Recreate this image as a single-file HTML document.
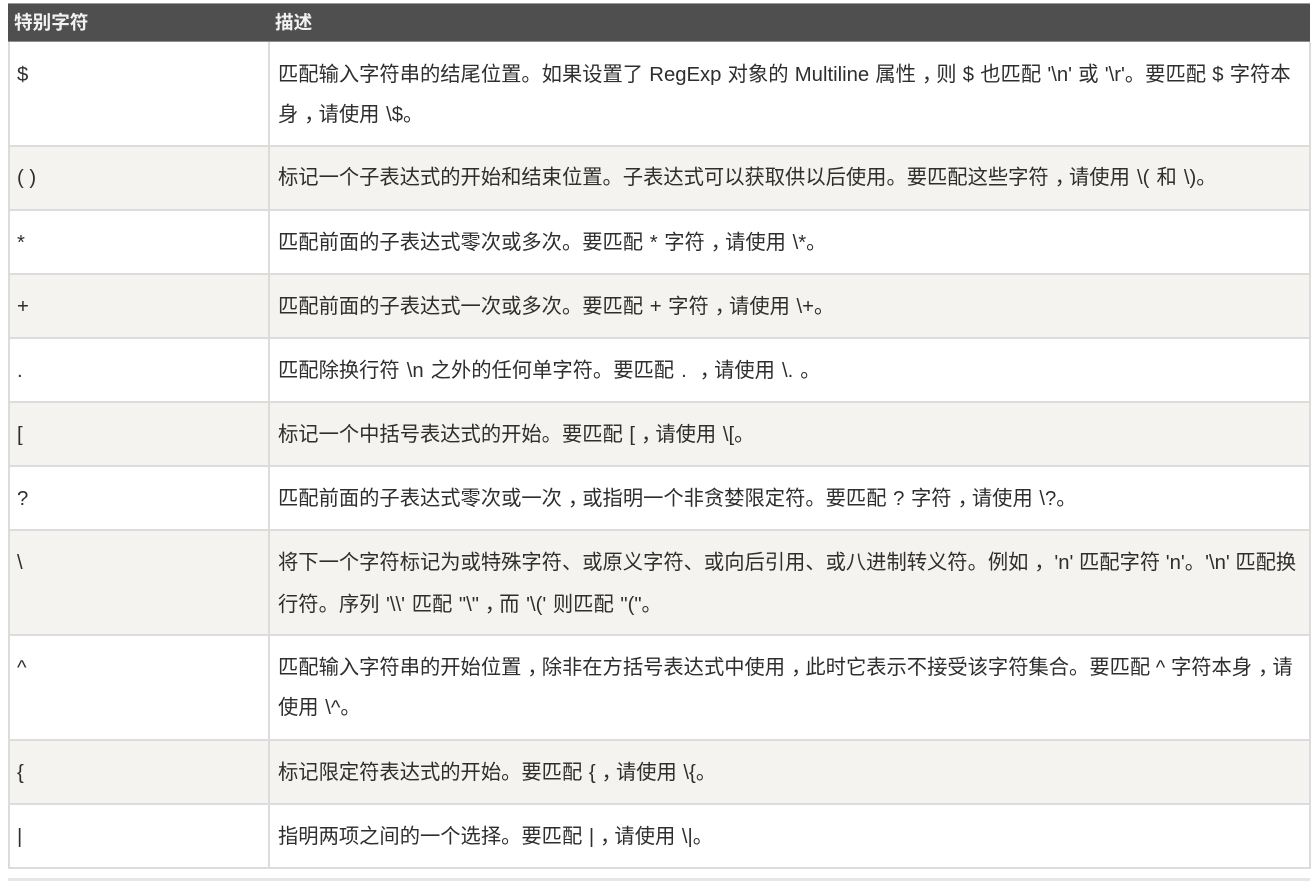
<!DOCTYPE html>
<html lang="zh"><head><meta charset="utf-8">
<style>
html,body{margin:0;padding:0;width:1314px;height:881px;overflow:hidden;background:#fff}
body{position:relative;font-family:"Liberation Sans","WenQuanYi Zen Hei","Noto Sans CJK SC",sans-serif;font-size:20.3px;color:#2e2e2e;filter:blur(.3px)}
.b{position:absolute;left:8px;width:1302px;box-sizing:border-box}
.o{background:#f4f3ef}
.h{position:absolute;background:#dcdcdc;left:8px;width:1302px;height:2px}
.v{position:absolute;background:#dcdcdc;width:2px}
.t{position:absolute;left:278px;white-space:pre;line-height:24px;height:24px;word-spacing:1px}
.k{position:absolute;left:17px;white-space:pre;line-height:24px;height:24px}
.w{position:absolute;color:#f2f2f2;font-weight:bold;font-size:18.6px;line-height:24px;white-space:pre;top:11px}
i{font-style:normal;position:relative;left:6px}
</style></head><body>
<div class="b" style="top:3px;height:39px;background:#4f4f4f;border-top:1px solid #9a9a9a;border-bottom:1px solid #8c8c8c"></div>
<div class="w" style="left:14px">特别字符</div>
<div class="w" style="left:275px">描述</div>

<div class="b o" style="top:146px;height:64px"></div>
<div class="b o" style="top:274px;height:64px"></div>
<div class="b o" style="top:402px;height:64px"></div>
<div class="b o" style="top:530px;height:105px"></div>
<div class="b o" style="top:740px;height:64px"></div>

<div class="h" style="top:145px"></div>
<div class="h" style="top:209px"></div>
<div class="h" style="top:273px"></div>
<div class="h" style="top:337px"></div>
<div class="h" style="top:401px"></div>
<div class="h" style="top:465px"></div>
<div class="h" style="top:529px"></div>
<div class="h" style="top:634px"></div>
<div class="h" style="top:739px"></div>
<div class="h" style="top:803px"></div>
<div class="h" style="top:867px"></div>
<div class="h" style="top:878px;height:3px;background:#e6e6e6"></div>
<div class="v" style="left:8px;top:42px;height:827px"></div>
<div class="v" style="left:268px;top:42px;height:827px"></div>
<div class="v" style="left:1309px;top:42px;height:827px"></div>

<div class="k" style="top:63px">$</div>
<div class="k" style="top:166px">( )</div>
<div class="k" style="top:231px">*</div>
<div class="k" style="top:295px">+</div>
<div class="k" style="top:359px">.</div>
<div class="k" style="top:423px">[</div>
<div class="k" style="top:487px">?</div>
<div class="k" style="top:551px">\</div>
<div class="k" style="top:656px">^</div>
<div class="k" style="top:761px">{</div>
<div class="k" style="top:825px">|</div>

<div class="t" style="top:63px;word-spacing:.6px">匹配输入字符串的结尾位置。如果设置了 RegExp 对象的 Multiline 属性<i>，</i>则 $ 也匹配 '\n' 或 '\r'。要匹配 $ 字符本</div>
<div class="t" style="top:103px">身<i>，</i>请使用 \$。</div>
<div class="t" style="top:166px;word-spacing:1.5px">标记一个子表达式的开始和结束位置。子表达式可以获取供以后使用。要匹配这些字符<i>，</i>请使用 \( 和 \)。</div>
<div class="t" style="top:231px">匹配前面的子表达式零次或多次。要匹配 * 字符<i>，</i>请使用 \*。</div>
<div class="t" style="top:295px">匹配前面的子表达式一次或多次。要匹配 + 字符<i>，</i>请使用 \+。</div>
<div class="t" style="top:359px;word-spacing:1.4px">匹配除换行符 \n 之外的任何单字符。要匹配 . <i>，</i>请使用 \. 。</div>
<div class="t" style="top:423px">标记一个中括号表达式的开始。要匹配 [<i>，</i>请使用 \[。</div>
<div class="t" style="top:487px">匹配前面的子表达式零次或一次<i>，</i>或指明一个非贪婪限定符。要匹配 ? 字符<i>，</i>请使用 \?。</div>
<div class="t" style="top:551px;word-spacing:0">将下一个字符标记为或特殊字符、或原义字符、或向后引用、或八进制转义符。例如<i>，</i> 'n' 匹配字符 'n'。'\n' 匹配换</div>
<div class="t" style="top:593px">行符。序列 '\\' 匹配 "\"<i>，</i>而 '\(' 则匹配 "("。</div>
<div class="t" style="top:656px;word-spacing:0">匹配输入字符串的开始位置<i>，</i>除非在方括号表达式中使用<i>，</i>此时它表示不接受该字符集合。要匹配 ^ 字符本身<i>，</i>请</div>
<div class="t" style="top:696px">使用 \^。</div>
<div class="t" style="top:761px">标记限定符表达式的开始。要匹配 {<i>，</i>请使用 \{。</div>
<div class="t" style="top:825px">指明两项之间的一个选择。要匹配 |<i>，</i>请使用 \|。</div>
</body></html>
